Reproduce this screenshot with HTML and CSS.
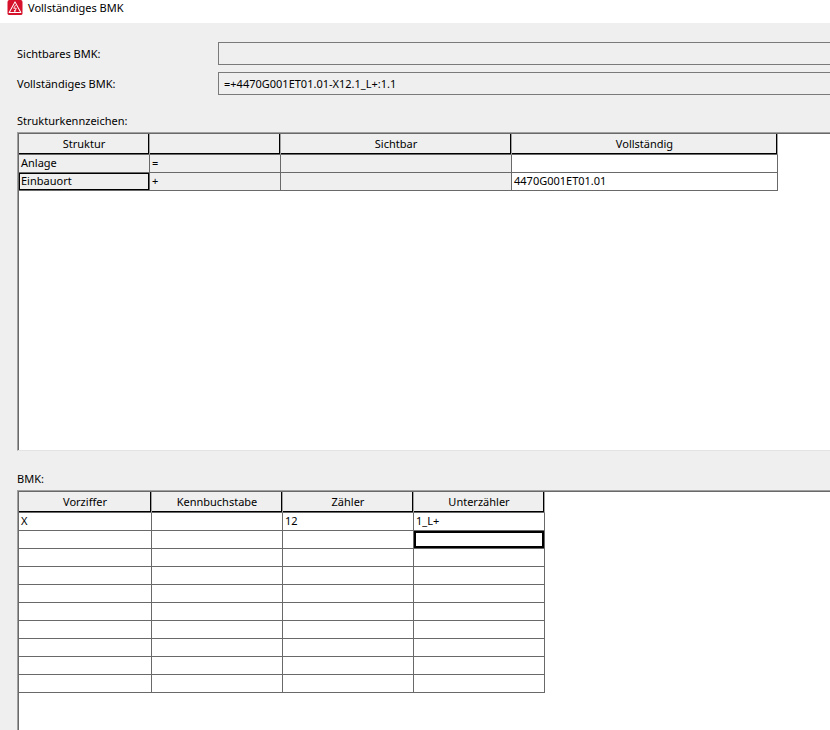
FILE: index.html
```html
<!DOCTYPE html>
<html lang="de">
<head>
<meta charset="utf-8">
<title>Vollständiges BMK</title>
<link rel="stylesheet" href="styles.css">
</head>
<body>
<header class="titlebar">
  <svg class="logo" viewBox="0 0 16 16" aria-hidden="true">
    <rect width="16" height="16" rx="2" fill="#d5112b"/>
    <path d="M8 2 L14.2 13.3 H1.8 Z" fill="none" stroke="#fff" stroke-width="1.1" stroke-linejoin="round"/>
    <path d="M8.6 5.4 L6.6 8.8 H9.4 L7.6 12.2 M7.3 10.6 L7.6 12.2 L9 11.4" fill="none" stroke="#fff" stroke-width="0.9"/>
  </svg>
  <h1 class="title">Vollständiges BMK</h1>
</header>
<main class="dialog">
  <div class="field">
    <label for="visible">Sichtbares BMK:</label>
    <input id="visible" type="text" readonly>
  </div>
  <div class="field">
    <label for="full">Vollständiges BMK:</label>
    <input id="full" type="text" readonly value="=+4470G001ET01.01-X12.1_L+:1.1">
  </div>

  <h2 class="caption" id="structure">Strukturkennzeichen:</h2>
  <div class="panel panel-structure">
    <table class="grid grid-structure" aria-labelledby="structure">
      <colgroup><col class="c-name"><col class="c-sign"><col class="c-visible"><col class="c-full"></colgroup>
      <thead><tr><th>Struktur</th><th></th><th>Sichtbar</th><th>Vollständig</th></tr></thead>
      <tbody>
        <tr><td class="locked">Anlage</td><td class="locked">=</td><td class="locked"></td><td></td></tr>
        <tr><td class="locked current">Einbauort</td><td class="locked">+</td><td class="locked"></td><td>4470G001ET01.01</td></tr>
      </tbody>
    </table>
  </div>

  <h2 class="caption" id="bmk">BMK:</h2>
  <div class="panel panel-bmk">
    <table class="grid grid-bmk" aria-labelledby="bmk">
      <colgroup><col class="c-prefix"><col class="c-part"><col class="c-part"><col class="c-part"></colgroup>
      <thead><tr><th>Vorziffer</th><th>Kennbuchstabe</th><th>Zähler</th><th>Unterzähler</th></tr></thead>
      <tbody>
        <tr><td>X</td><td></td><td>12</td><td>1_L+</td></tr>
        <tr><td></td><td></td><td></td><td class="selected"></td></tr>
        <tr><td></td><td></td><td></td><td></td></tr>
        <tr><td></td><td></td><td></td><td></td></tr>
        <tr><td></td><td></td><td></td><td></td></tr>
        <tr><td></td><td></td><td></td><td></td></tr>
        <tr><td></td><td></td><td></td><td></td></tr>
        <tr><td></td><td></td><td></td><td></td></tr>
        <tr><td></td><td></td><td></td><td></td></tr>
        <tr><td></td><td></td><td></td><td></td></tr>
      </tbody>
    </table>
  </div>
</main>
</body>
</html>
```
FILE: styles.css
```css
* {
  box-sizing: border-box;
}

body {
  display: flex;
  flex-direction: column;
  height: 100vh;
  margin: 0;
  overflow: hidden;
  background: #efefef;
  color: #000;
  font: 11px/16px "Noto Sans", "Open Sans", sans-serif;
}

.titlebar {
  display: flex;
  align-items: flex-start;
  gap: 5px;
  height: 23px;
  padding-left: 7px;
  background: #fff;
}

.logo {
  width: 16px;
  height: 15px;
}

.title,
.caption {
  margin: 0;
  font-size: 11px;
  font-weight: 400;
}

.dialog {
  display: flex;
  flex: 1;
  flex-direction: column;
  min-height: 0;
  padding: 19px 0 0 17px;
}

.field {
  display: flex;
  align-items: center;
  margin-bottom: 7px;
}

.field label {
  width: 201px;
}

.field input {
  flex: 1;
  height: 23px;
  padding: 0 5px 1px;
  border: 1px solid #7a7a7a;
  border-right: 0;
  border-radius: 0;
  background: #efefef;
  color: #000;
  font: inherit;
  outline: 0;
}

.caption {
  padding: 11px 0 3px;
}

.panel {
  padding: 1px 0 0 1px;
  border-top: 1px solid #a0a0a0;
  border-left: 1px solid #a0a0a0;
  background: #fff;
  box-shadow: inset 1px 1px #696969;
}

.panel-structure {
  flex: 0 0 319px;
  margin-bottom: 9px;
  border-bottom: 1px solid #e3e3e3;
}

.panel-bmk {
  flex: 1;
  min-height: 0;
}

.grid {
  border-collapse: separate;
  border-spacing: 0;
  table-layout: fixed;
}

.grid-structure {
  width: 759px;
}

.grid-bmk {
  width: 526px;
}

.c-name,
.c-sign,
.c-part {
  width: 131px;
}

.c-visible {
  width: 231px;
}

.c-full {
  width: 266px;
}

.c-prefix {
  width: 133px;
}

.grid th {
  height: 21px;
  padding: 0;
  border-right: 1px solid #a0a0a0;
  border-bottom: 1px solid #696969;
  background: #efefef;
  box-shadow: inset -1px -1px #000;
  font-weight: 400;
}

.grid td {
  height: 18px;
  padding: 0 2px 2px;
  border-right: 1px solid #696969;
  border-bottom: 1px solid #696969;
  line-height: 15px;
}

.grid .locked {
  background: #efefef;
}

.grid .current {
  box-shadow: inset 0 0 0 1px #000;
}

.grid .selected {
  box-shadow: inset 0 0 0 2px #000;
}
```
